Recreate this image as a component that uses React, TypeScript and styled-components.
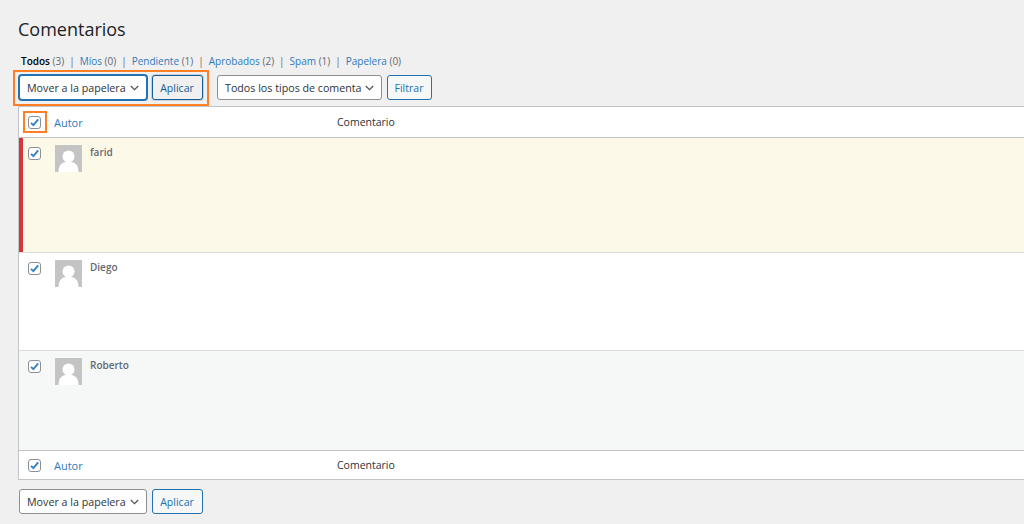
import React from "react";
import styled, { createGlobalStyle } from "styled-components";

const GlobalStyle = createGlobalStyle`
  html, body {
    margin: 0;
    padding: 0;
    background: #f0f0f1;
  }
  body {
    font-family: "Open Sans", "Noto Sans", sans-serif;
    color: #3c434a;
  }
`;

const Page = styled.div`
  position: relative;
  width: 1024px;
  height: 524px;
  overflow: hidden;
  padding: 18px 0 0 18px;
  box-sizing: border-box;
`;

const Title = styled.h1`
  margin: 0;
  font-size: 18px;
  line-height: 22px;
  font-weight: 400;
  color: #1d2327;
`;

const Filters = styled.ul`
  display: flex;
  list-style: none;
  margin: 14px 0 0 3px;
  padding: 0;
  height: 15px;
  font-size: 10px;
  line-height: 15px;
  color: #646970;
`;

const FilterItem = styled.li`
  white-space: pre;
`;

const FilterLink = styled.a<{ $current?: boolean }>`
  color: ${(p) => (p.$current ? "#000" : "#2f7ab8")};
  font-weight: ${(p) => (p.$current ? 600 : 400)};
`;

const Separator = styled.span`
  margin: 0 5px 0 5px;
`;

const Toolbar = styled.div<{ $top: number }>`
  display: flex;
  align-items: center;
  height: 25px;
  margin: ${(p) => p.$top}px 0 0 1px;
`;

const Dropdown = styled.div<{ $width: number; $focus?: boolean }>`
  display: flex;
  align-items: center;
  justify-content: space-between;
  box-sizing: border-box;
  width: ${(p) => p.$width}px;
  height: 25px;
  padding: 0 7px 0 7px;
  background: #fff;
  border: 1px solid ${(p) => (p.$focus ? "#2271b1" : "#8c8f94")};
  box-shadow: ${(p) => (p.$focus ? "0 0 0 1px #2271b1" : "none")};
  border-radius: 3px;
  font-size: 10.7px;
  color: #2c3338;
  white-space: nowrap;
  overflow: hidden;
`;

const Chevron = styled.svg`
  flex: none;
  width: 9px;
  height: 6px;
`;

const Button = styled.button<{ $pressed?: boolean; $width: number }>`
  box-sizing: border-box;
  width: ${(p) => p.$width}px;
  height: 25px;
  margin-left: 4.5px;
  padding: 0;
  font-family: inherit;
  font-size: 10.5px;
  border-radius: 3px;
  color: ${(p) => (p.$pressed ? "#135e96" : "#2271b1")};
  background: ${(p) => (p.$pressed ? "#f0f0f1" : "#f6f7f7")};
  border: 1px solid ${(p) => (p.$pressed ? "#135e96" : "#2271b1")};
  box-shadow: ${(p) => (p.$pressed ? "0 0 0 1px #ccd0d4" : "none")};
`;

const Spacer = styled.div`
  width: 14.5px;
`;

const Table = styled.div`
  width: 1040px;
  margin-top: 6px;
  background: #fff;
  border: 1px solid #c3c4c7;
  box-sizing: border-box;
`;

const HeadRow = styled.div<{ $foot?: boolean }>`
  display: flex;
  align-items: center;
  height: ${(p) => (p.$foot ? 29 : 31)}px;
  box-sizing: border-box;
  border-${(p) => (p.$foot ? "top" : "bottom")}: 1px solid #c3c4c7;
  font-size: 10.5px;
  color: #2c3338;
`;

const CheckCell = styled.div<{ $top?: number }>`
  display: flex;
  justify-content: center;
  width: 30px;
  flex: none;
  margin-top: ${(p) => p.$top ?? 0}px;
`;

const AuthorHead = styled.a`
  width: 283px;
  margin-left: 5px;
  color: #2f7ab8;
  font-size: 11px;
`;

const CommentHead = styled.span`
  font-size: 10.5px;
`;

const Row = styled.div<{ $height: number; $bg: string; $pending?: boolean }>`
  display: flex;
  align-items: flex-start;
  box-sizing: border-box;
  height: ${(p) => p.$height}px;
  padding-top: 7px;
  background: ${(p) => p.$bg};
  border-bottom: 1px solid #dcdcde;
  box-shadow: ${(p) => (p.$pending ? "inset 4px 0 0 #d63638" : "none")};

  &:nth-last-child(2) {
    border-bottom: none;
  }
`;

const Box = styled.span`
  display: flex;
  align-items: center;
  justify-content: center;
  box-sizing: border-box;
  width: 13px;
  height: 13px;
  background: #fff;
  border: 1px solid #8c8f94;
  border-radius: 3px;
`;

const Avatar = styled.svg`
  display: block;
  flex: none;
  width: 27px;
  height: 27px;
  margin-left: 6px;
`;

const Name = styled.strong`
  margin-left: 8px;
  font-size: 10px;
  line-height: 14px;
  font-weight: 600;
  color: #646970;
`;

const Highlight = styled.div`
  position: absolute;
  box-sizing: border-box;
  border: 2.5px solid #ff7f24;
`;

const BulkHighlight = styled(Highlight)`
  left: 13px;
  top: 70px;
  width: 196px;
  height: 36px;
`;

const CheckHighlight = styled(Highlight)`
  left: 23px;
  top: 111px;
  width: 24px;
  height: 22px;
`;

const filters = [
  { label: "Todos", count: 3, current: true },
  { label: "Míos", count: 0 },
  { label: "Pendiente", count: 1 },
  { label: "Aprobados", count: 2 },
  { label: "Spam", count: 1 },
  { label: "Papelera", count: 0 },
];

const comments = [
  { name: "farid", height: 115, bg: "#fcf9e8", pending: true },
  { name: "Diego", height: 98, bg: "#fff" },
  { name: "Roberto", height: 99, bg: "#f6f7f7" },
];

const Check = () => (
  <Box>
    <svg width="11" height="11" viewBox="0 0 11 11">
      <path d="M2 5.8 L4.4 8.2 L9.2 2.4" fill="none" stroke="#3582c4" strokeWidth="1.9" />
    </svg>
  </Box>
);

const Arrow = () => (
  <Chevron viewBox="0 0 9 6">
    <path d="M0.8 1 L4.5 4.7 L8.2 1" fill="none" stroke="#50575e" strokeWidth="1.3" />
  </Chevron>
);

const Gravatar = () => (
  <Avatar viewBox="0 0 27 27">
    <rect width="27" height="27" fill="#c4c4c4" />
    <circle cx="13.5" cy="11.5" r="6" fill="#fff" />
    <path d="M3.5 27 C3.5 20 7 16.5 13.5 16.5 C20 16.5 23.5 20 23.5 27 Z" fill="#fff" />
  </Avatar>
);

export default function App() {
  return (
    <>
      <GlobalStyle />
      <Page>
        <Title>Comentarios</Title>
        <Filters>
          {filters.map((f, i) => (
            <FilterItem key={f.label}>
              <FilterLink $current={f.current}>{f.label}</FilterLink> ({f.count})
              {i < filters.length - 1 ? <Separator>|</Separator> : null}
            </FilterItem>
          ))}
        </Filters>
        <Toolbar $top={6}>
          <Dropdown $width={128} $focus>
            Mover a la papelera
            <Arrow />
          </Dropdown>
          <Button $pressed $width={51}>
            Aplicar
          </Button>
          <Spacer />
          <Dropdown $width={165}>
            Todos los tipos de comenta
            <Arrow />
          </Dropdown>
          <Button $width={45}>Filtrar</Button>
        </Toolbar>
        <Table>
          <HeadRow>
            <CheckCell>
              <Check />
            </CheckCell>
            <AuthorHead>Autor</AuthorHead>
            <CommentHead>Comentario</CommentHead>
          </HeadRow>
          {comments.map((c) => (
            <Row key={c.name} $height={c.height} $bg={c.bg} $pending={c.pending}>
              <CheckCell $top={2}>
                <Check />
              </CheckCell>
              <Gravatar />
              <Name>{c.name}</Name>
            </Row>
          ))}
          <HeadRow $foot>
            <CheckCell>
              <Check />
            </CheckCell>
            <AuthorHead>Autor</AuthorHead>
            <CommentHead>Comentario</CommentHead>
          </HeadRow>
        </Table>
        <Toolbar $top={9}>
          <Dropdown $width={128}>
            Mover a la papelera
            <Arrow />
          </Dropdown>
          <Button $width={51}>Aplicar</Button>
        </Toolbar>
        <BulkHighlight />
        <CheckHighlight />
      </Page>
    </>
  );
}
